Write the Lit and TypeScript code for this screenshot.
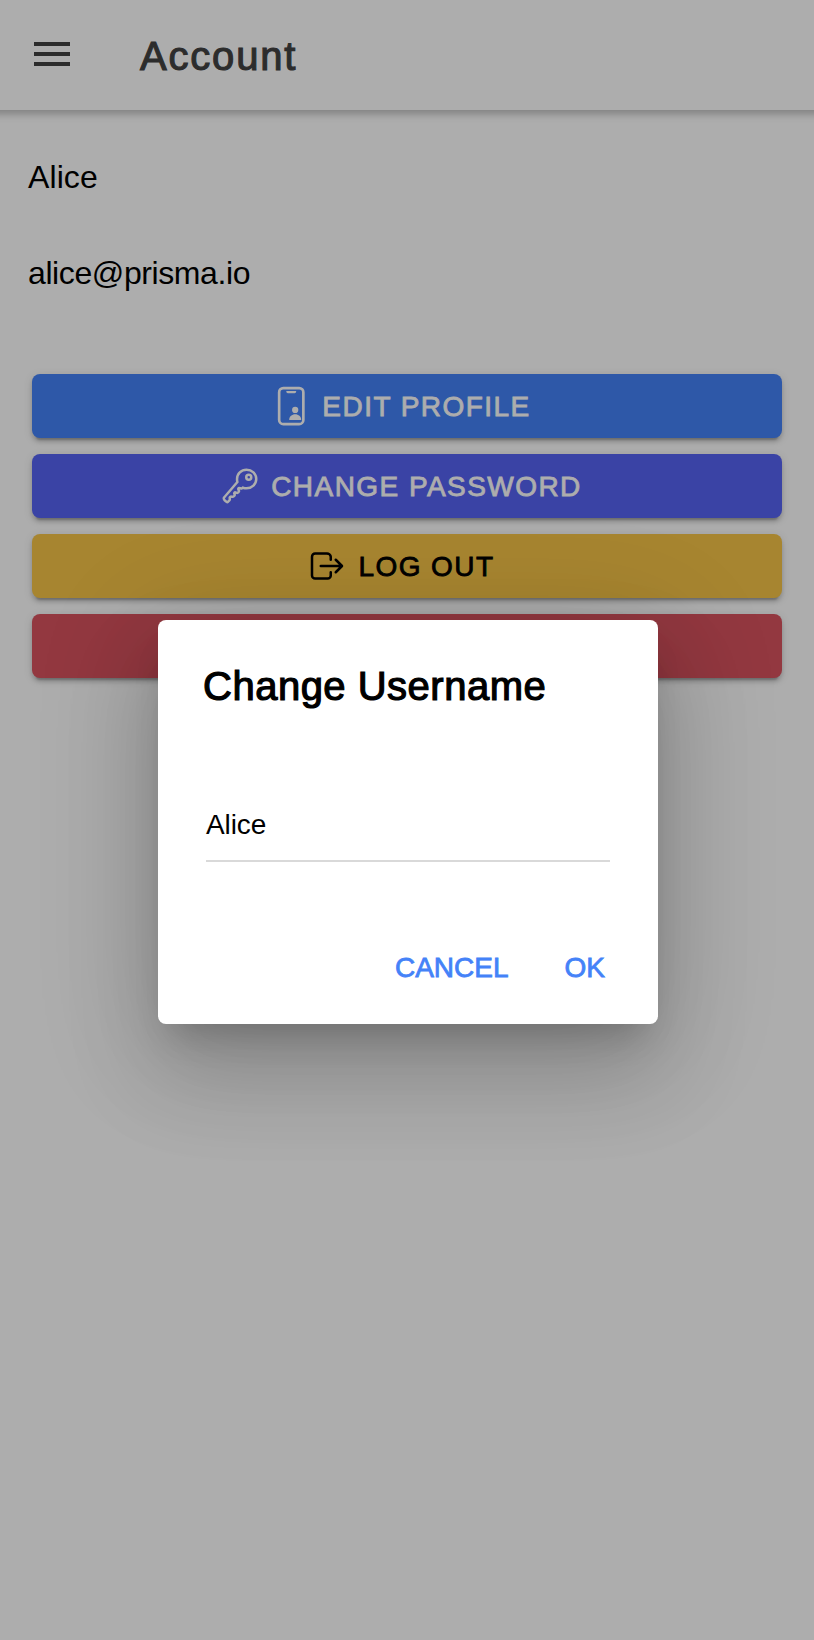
import { LitElement, html, css, svg } from "lit";
import { customElement } from "lit/decorators.js";

const phoneIcon = svg`<g transform="translate(16 13) scale(.95)">
  <rect x="93" y="14" width="326" height="486" rx="56" fill="none" stroke="currentColor" stroke-width="36"/>
  <path d="M190 54h132v10q0 20-20 20h-92q-20 0-20-20z" fill="currentColor"/>
  <circle cx="309" cy="309" r="42" fill="currentColor"/>
  <path d="M228 440c0-44 38-74 81-74s81 30 81 74q0 6-6 6H234q-6 0-6-6z" fill="currentColor"/></g>`;

const keyIcon = svg`
  <path fill="none" stroke="currentColor" stroke-width="32" stroke-linecap="round" stroke-miterlimit="10" d="M218.1 167.17c0 13 0 25.6 4.1 37.4-43.1 50.6-156.9 184.3-167.5 194.5a20.17 20.17 0 00-6.7 15c0 8.5 5.2 16.7 9.6 21.3 6.6 6.9 34.8 33 40 28 15.4-15 18.5-19 24.8-25.2 9.5-9.3-1-28.3 2.3-36s6.8-9.2 12.5-10.4 15.8 2.9 23.7 3c8.3.1 12.8-3.4 19-9.2 5-4.6 8.6-8.9 8.7-15.6.2-9-12.8-20.9-3.1-30.4s23.7 6.2 34 5 22.8-15.5 24.1-21.6-11.7-21.8-9.7-30.7c.7-3 6.8-10 11.4-11s25 6.9 29.6 5.9c5.6-1.2 12.1-7.1 17.4-10.4 15.5 6.7 29.6 9.4 47.7 9.4 68.5 0 124-53.4 124-119.2S408.5 48 340 48s-121.9 53.37-121.9 119.17zM400 144a32 32 0 11-32-32 32 32 0 0132 32z"/>`;

const logOutIcon = svg`
  <path fill="none" stroke="currentColor" stroke-width="32" stroke-linecap="round" stroke-linejoin="round" d="M304 336v40a40 40 0 01-40 40H104a40 40 0 01-40-40V136a40 40 0 0140-40h152c22.09 0 48 17.91 48 40v40M368 336l80-80-80-80M176 256h256"/>`;

@customElement("app-root")
export class AppRoot extends LitElement {
  static styles = css`
    :host {
      display: block;
      position: relative;
      height: 1640px;
      overflow: hidden;
      background: #fff;
      color: #000;
      font-family: "Liberation Sans", Arial, sans-serif;
    }
    * { box-sizing: border-box; }
    .header {
      display: flex;
      align-items: center;
      height: 110px;
      padding-left: 34px;
      color: #424242;
      box-shadow: 0 -6px 8px 10px rgba(0, 0, 0, 0.26);
    }
    .menu { display: grid; gap: 6px; width: 36px; margin-bottom: 2px; }
    .menu i { height: 4px; background: currentColor; }
    .title {
      margin: 1px 0 0 70px;
      font-size: 40px;
      line-height: 46px;
      font-weight: 400;
      letter-spacing: 1.8px;
      -webkit-text-stroke: 1.1px currentColor;
    }
    .info { padding: 49px 28px 0; font-size: 32px; line-height: 36px; }
    .line { margin: 0 0 60px; }
    .name { letter-spacing: 0.1px; }
    .mail { letter-spacing: -0.4px; }
    .actions { display: grid; gap: 16px; padding: 23px 32px 0; }
    .btn {
      display: flex;
      align-items: center;
      justify-content: center;
      height: 64px;
      border: 0;
      padding: 0 12px 0 0;
      border-radius: 8px;
      color: #fff;
      font: 400 28px/32px "Liberation Sans", Arial, sans-serif;
      letter-spacing: 1.45px;
      -webkit-text-stroke: 0.8px currentColor;
      box-shadow: 0 6px 2px -4px rgba(0, 0, 0, 0.2), 0 4px 4px rgba(0, 0, 0, 0.14), 0 2px 10px rgba(0, 0, 0, 0.12);
    }
    .btn span { padding-top: 1px; }
    .primary { background: #4482f8; }
    .tertiary { background: #5663f4; }
    .warning { background: #f7c548; color: #000; }
    .danger { background: #d9535f; }
    .icon { width: 40px; height: 40px; margin-right: 11px; flex: none; }
    .backdrop {
      position: absolute;
      inset: 0;
      display: flex;
      align-items: center;
      justify-content: center;
      padding: 4px 0 0 2px;
      background: rgba(0, 0, 0, 0.32);
    }
    .dialog {
      width: 500px;
      height: 404px;
      padding: 43px 45px 0;
      border-radius: 8px;
      background: #fff;
      box-shadow: 0 22px 34px -14px rgba(0, 0, 0, 0.2), 0 48px 92px 6px rgba(0, 0, 0, 0.14), 0 18px 116px 16px rgba(0, 0, 0, 0.12);
    }
    .heading {
      margin: 0;
      font-size: 40px;
      line-height: 46px;
      font-weight: 400;
      letter-spacing: 0.5px;
      -webkit-text-stroke: 1.2px currentColor;
      white-space: nowrap;
    }
    .field {
      margin: 100px 3px 0;
      height: 53px;
      border-bottom: 2px solid #d9d9d9;
      font-size: 28px;
      line-height: 32px;
      letter-spacing: -0.1px;
    }
    .buttons {
      display: flex;
      justify-content: flex-end;
      gap: 56px;
      padding: 90px 8px 0 0;
    }
    .link {
      border: 0;
      padding: 0;
      background: none;
      color: #4482f8;
      font: 400 28px/32px "Liberation Sans", Arial, sans-serif;
      -webkit-text-stroke: 0.8px currentColor;
    }
  `;

  private button(kind: string, label: string, icon?: unknown) {
    return html`<button class="btn ${kind}">
      ${icon ? html`<svg class="icon" viewBox="0 0 512 512">${icon}</svg>` : ""}<span>${label}</span>
    </button>`;
  }

  render() {
    return html`
      <header class="header">
        <div class="menu"><i></i><i></i><i></i></div>
        <h1 class="title">Account</h1>
      </header>
      <main>
        <div class="info">
          <p class="line name">Alice</p>
          <p class="line mail">alice@prisma.io</p>
        </div>
        <div class="actions">
          ${this.button("primary", "EDIT PROFILE", phoneIcon)}
          ${this.button("tertiary", "CHANGE PASSWORD", keyIcon)}
          ${this.button("warning", "LOG OUT", logOutIcon)}
          ${this.button("danger", "")}
        </div>
      </main>
      <div class="backdrop">
        <section class="dialog" role="dialog">
          <h2 class="heading">Change Username</h2>
          <div class="field">Alice</div>
          <div class="buttons">
            <button class="link">CANCEL</button>
            <button class="link">OK</button>
          </div>
        </section>
      </div>
    `;
  }
}
